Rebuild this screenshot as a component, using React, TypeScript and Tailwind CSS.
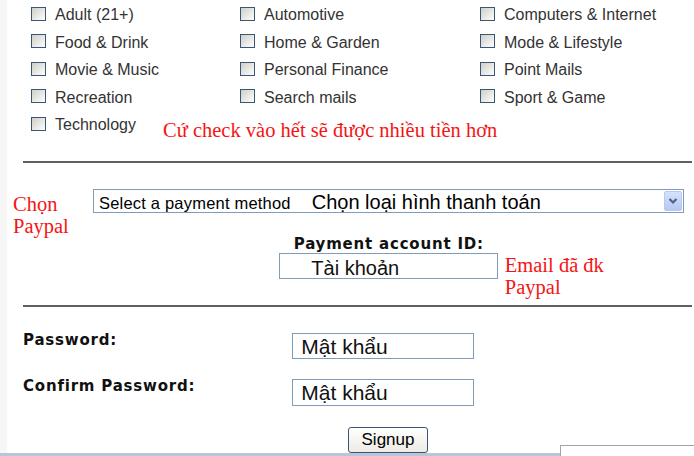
const rowA = [
  ["Adult (21+)", "Automotive", "Computers & Internet"],
  ["Food & Drink", "Home & Garden", "Mode & Lifestyle"],
  ["Movie & Music", "Personal Finance", "Point Mails"],
  ["Recreation", "Search mails", "Sport & Game"],
]

function Box() {
  return (
    <span className="mb-[3px] h-[14px] w-[15px] shrink-0 border border-[#3a5675] bg-gradient-to-br from-[#d0d0ca] via-[#e6e6e2] to-white" />
  )
}

function Item({ label }: { label: string }) {
  return (
    <div className="flex h-[27.5px] items-center gap-[9px]">
      <Box />
      <span className="text-[16px] leading-[18px] text-[#333]">{label}</span>
    </div>
  )
}

const redText = "font-['Liberation_Serif',serif] text-[20.5px] leading-[22px] text-[#f51414]"
const boldLabel = "font-['DejaVu_Sans',sans-serif] text-[15px] font-bold leading-[16px] tracking-[0.8px] text-[#111]"

export default function App() {
  return (
    <div className="relative flex h-[456px] w-[694px] flex-col overflow-hidden bg-white font-['Liberation_Sans',Arial,sans-serif]">
      <div className="flex h-[453.3px] overflow-hidden">
        <div className="w-[7px] shrink-0 bg-[#f6f6f6]" />
        <div className="flex flex-1 flex-col">
          {/* categories */}
          <div className="pl-[24px] pt-[1.4px]">
            {rowA.map((row) => (
              <div key={row[0]} className="grid grid-cols-[209px_240px_1fr]">
                {row.map((l) => (
                  <Item key={l} label={l} />
                ))}
              </div>
            ))}
            <div className="flex items-start">
              <div className="w-[132px]">
                <Item label="Technology" />
              </div>
              <span className={`mt-[8px] ${redText}`}>Cứ check vào hết sẽ được nhiều tiền hơn</span>
            </div>
          </div>

          <div className="ml-[16px] mr-[2px] mt-[19.5px] h-[2px] bg-[#606060]" />

          {/* payment */}
          <div className="mt-[26.3px] flex items-start">
            <div className={`w-[86.3px] pl-[6px] pt-[4px] ${redText}`}>
              Chọn
              <br />
              Paypal
            </div>
            <div className="flex w-[591px] flex-col">
              <div className="flex h-[24px] items-start border border-[#7f9db9] bg-white">
                <div className="flex flex-1 items-baseline pl-[4.7px] pt-[1px] leading-[22px] text-black">
                  <span className="text-[16.5px] tracking-[0.2px]">Select a payment method</span>
                  <span className="ml-[21px] text-[20px]">Chọn loại hình thanh toán</span>
                </div>
                <div className="mr-[1px] mt-[1px] flex h-[20px] w-[18px] items-center justify-center rounded-[2px] border border-[#b8c8ee] bg-gradient-to-b from-[#d6e2fc] to-[#b5c8f4]">
                  <svg width="10" height="8" viewBox="0 0 10 8">
                    <path d="M1.5 2 L5 5.5 L8.5 2" fill="none" stroke="#4d6185" strokeWidth="2.2" />
                  </svg>
                </div>
              </div>
              <div className={`mt-[22.85px] text-center ${boldLabel}`}>Payment account ID:</div>
              <div className="mt-[1.15px] grid grid-cols-[186px_219px_1fr]">
                <div />
                <div className="h-[26px] border border-[#7f9db9] pl-[31px] pt-[3px] text-[20px] leading-[22px] text-[#111]">
                  Tài khoản
                </div>
                <div className={`ml-[6.5px] mt-[0.6px] ${redText}`}>
                  Email đã đk
                  <br />
                  Paypal
                </div>
              </div>
            </div>
          </div>

          <div className="ml-[16px] mr-[2px] mt-[7px] h-[2px] bg-[#606060]" />

          {/* passwords */}
          <div className="ml-[16px] mt-[25px] flex items-start">
            <div className={`w-[269.3px] ${boldLabel}`}>Password:</div>
            <div className="mt-[1.25px] h-[26.6px] w-[181.7px] border border-[#7f9db9] pl-[8px] pt-[1px] text-[21px] leading-[23px] text-[#111]">
              Mật khẩu
            </div>
          </div>
          <div className="ml-[16px] mt-[18.55px] flex items-start">
            <div className={`w-[269.3px] ${boldLabel}`}>Confirm Password:</div>
            <div className="mt-[1.45px] h-[26.6px] w-[181.7px] border border-[#7f9db9] pl-[8px] pt-[1px] text-[21px] leading-[23px] text-[#111]">
              Mật khẩu
            </div>
          </div>

          <div className="ml-[341.3px] mt-[20.7px]">
            <button className="flex h-[26.6px] w-[79.4px] items-center justify-center rounded-[3px] border-[1.5px] border-[#3f5272] bg-gradient-to-b from-white to-[#ecebe4] text-[17px] leading-[19px] text-black">
              Signup
            </button>
          </div>
        </div>
      </div>
      <div className="h-[2.7px] bg-[#b6c7dc]" />
      <div className="absolute bottom-0 right-0 h-[11px] w-[134px] border-l border-t border-[#a4a4a4] bg-white" />
    </div>
  )
}
